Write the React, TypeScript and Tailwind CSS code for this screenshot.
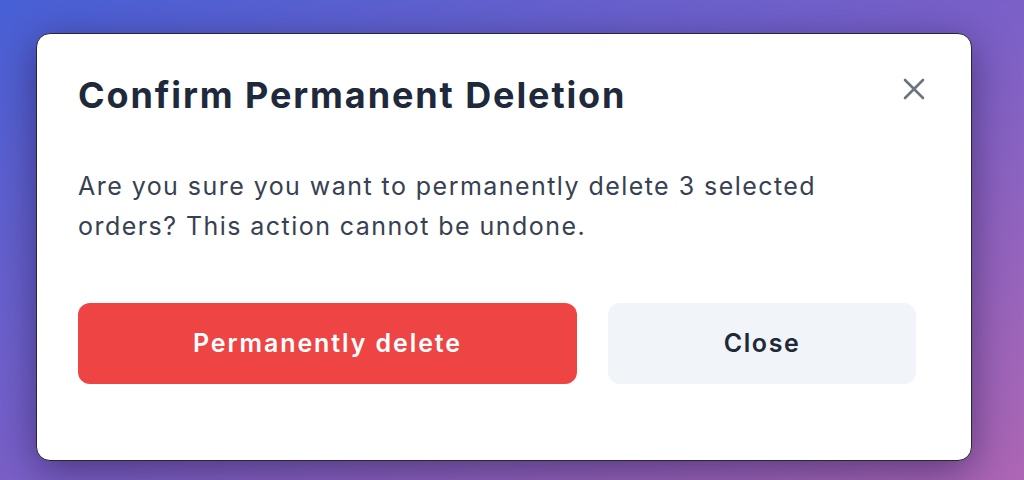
import React from "react";

export default function App() {
  return (
    <div
      className="w-[1024px] h-[480px] overflow-hidden bg-gradient-to-br from-[#4760d6] via-[#7a60c8] to-[#ad66b4] pt-[33px] pl-[36px]"
      style={{ fontFamily: "Inter, 'Noto Sans', sans-serif" }}
    >
      <div className="w-[936px] h-[428px] rounded-[14px] border border-[#262833] bg-white shadow-[0_10px_40px_rgba(30,20,70,0.55)] pl-[41px] pr-[45px] pt-[39px]">
        <div className="flex items-start justify-between">
          <h1 className="text-[36px] leading-[44px] font-bold text-[#1e293b] tracking-[1.9px]">
            Confirm Permanent Deletion
          </h1>
          <button className="mt-[4px] w-[24px] h-[24px] text-[#6b7280]" aria-label="Close">
            <svg viewBox="0 0 24 24" width="24" height="24" fill="none" stroke="currentColor" strokeWidth="2.6" strokeLinecap="round">
              <path d="M3 3L21 21M21 3L3 21" />
            </svg>
          </button>
        </div>
        <p className="mt-[49px] w-[780px] text-[25px] leading-[40px] text-[#374151] tracking-[1.45px]">
          Are you sure you want to permanently delete 3 selected orders? This action cannot be undone.
        </p>
        <div className="mt-[57px] flex gap-[31px]">
          <button className="w-[499px] h-[81px] rounded-[12px] bg-[#ef4444] text-white text-[25px] font-semibold tracking-[1.9px]">
            Permanently delete
          </button>
          <button className="w-[308px] h-[81px] rounded-[12px] bg-[#f1f4f9] text-[#1f2937] text-[25px] font-semibold tracking-[1.6px]">
            Close
          </button>
        </div>
      </div>
    </div>
  );
}
